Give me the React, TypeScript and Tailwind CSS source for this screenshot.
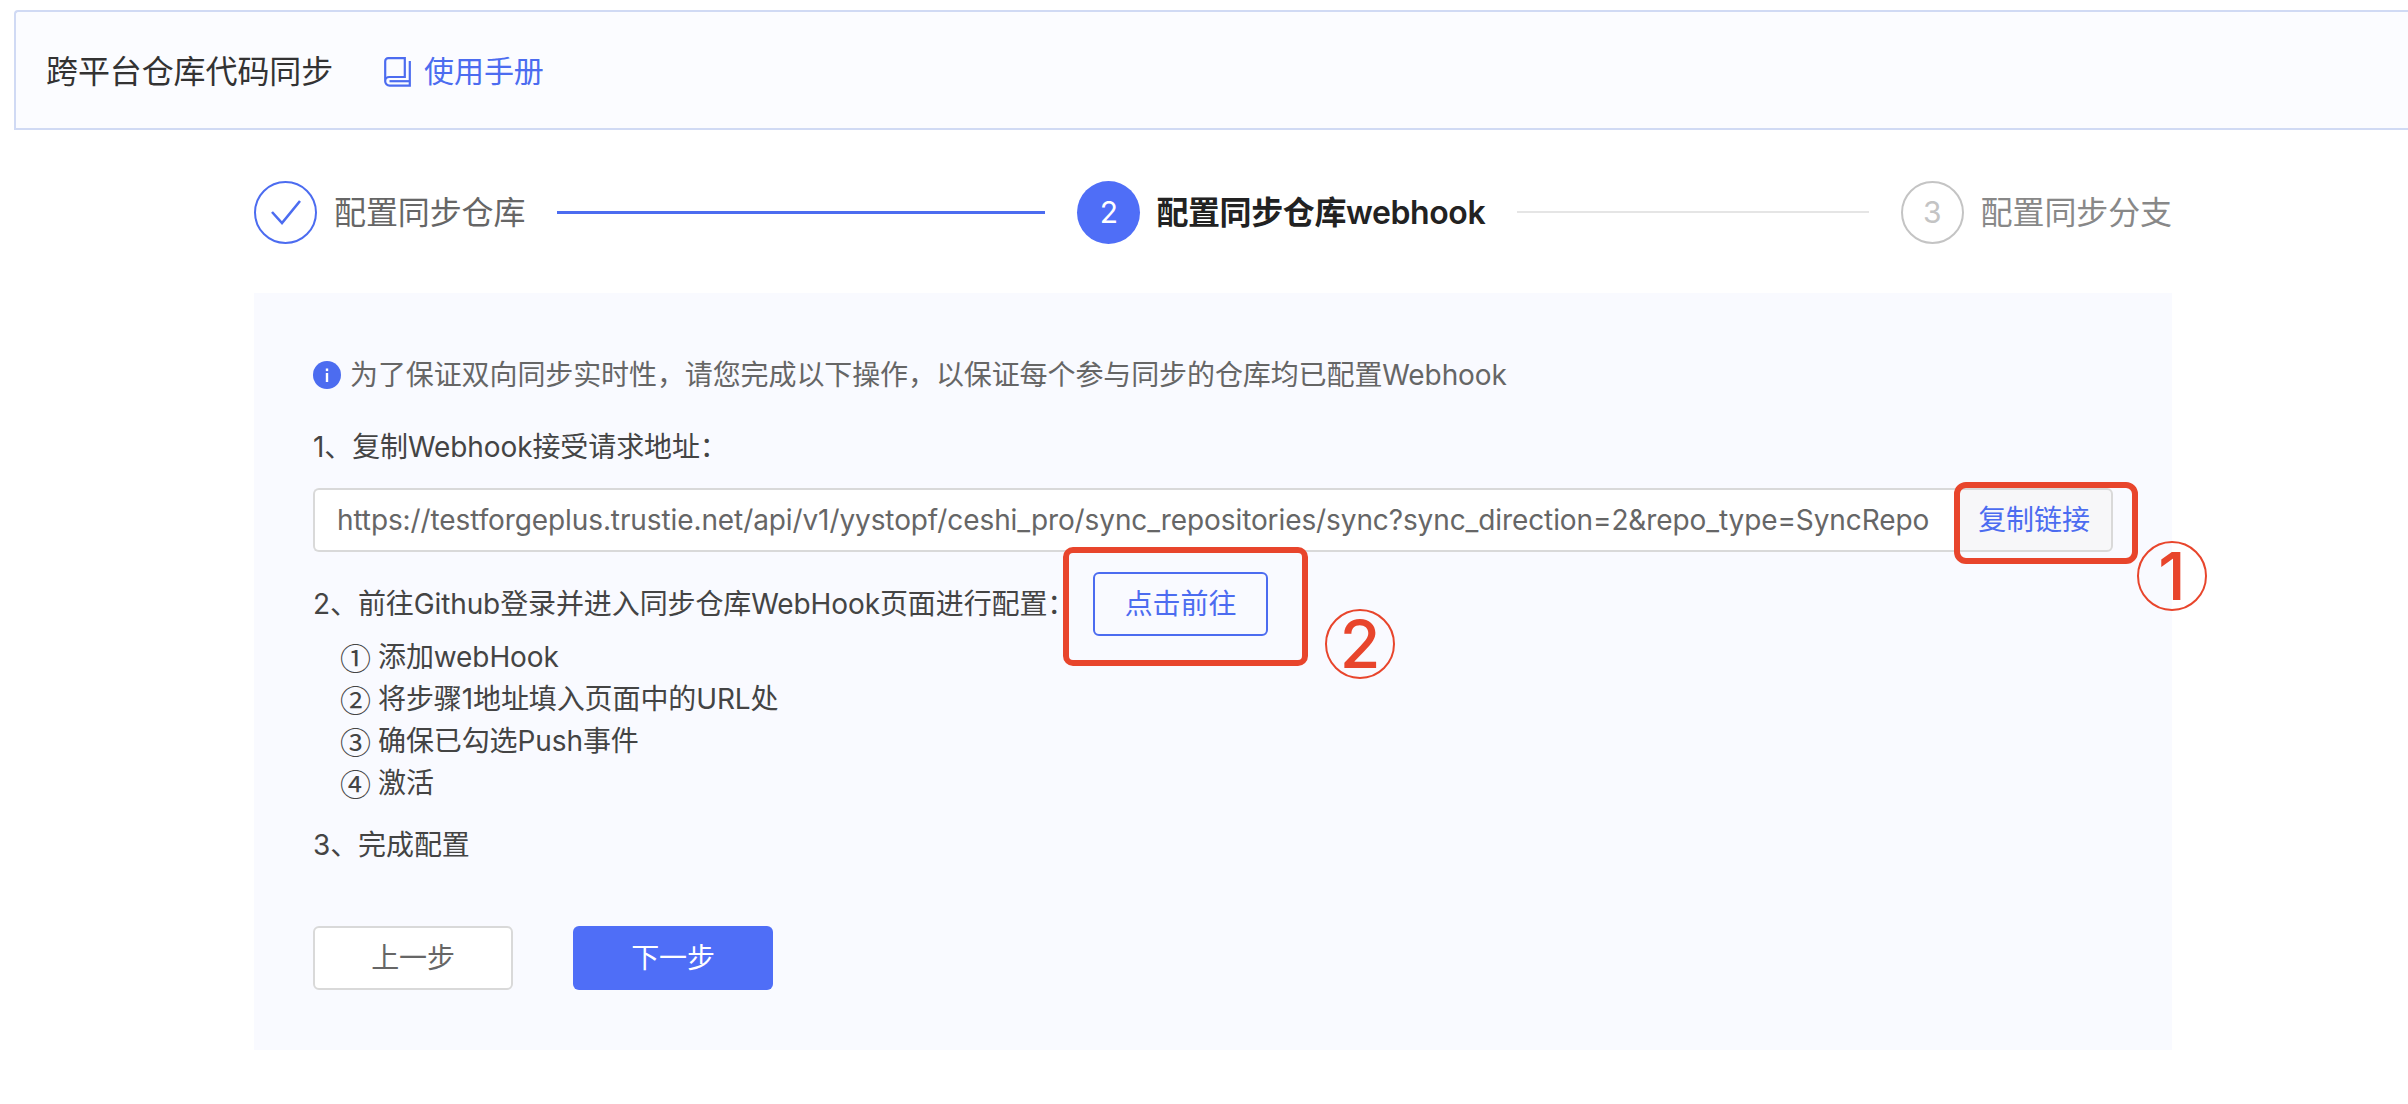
import React from 'react';

const FONT = 'font-["Inter","Noto_Sans_CJK_SC",sans-serif]';

const BookIcon = () => (
  <svg width="27" height="30" viewBox="0 0 27 30" fill="none" stroke="#4c6cf0" strokeWidth="2.2">
    <path d="M1.2 24V4.2a3 3 0 0 1 3-3h16.6V20H5.2a4 4 0 0 0-4 4 4.4 4.4 0 0 0 4.4 4.6h20.2V4" />
    <path d="M5.5 24.2h20" />
  </svg>
);

const InfoIcon = () => (
  <svg width="28" height="28" viewBox="0 0 28 28">
    <circle cx="14" cy="14" r="14" fill="#4c6cf0" />
    <rect x="12.8" y="12" width="2.4" height="9" fill="#fff" />
    <rect x="12.8" y="7.5" width="2.4" height="2.6" fill="#fff" />
  </svg>
);

const CheckIcon = () => (
  <svg width="30" height="25" viewBox="0 0 30 25" fill="none" stroke="#4c6cf0" strokeWidth="2.6">
    <path d="M1 12L11 23L29 1" />
  </svg>
);

const Annotation = ({ className, children }: { className: string; children: React.ReactNode }) => (
  <div className={`absolute flex h-[70px] w-[70px] items-center justify-center rounded-full border-[2.5px] border-[#e8452c] text-[66px] font-medium leading-none text-[#e8452c] ${className}`}>
    {children}
  </div>
);

const guideSteps = [
  { mark: '①', text: '添加webHook' },
  { mark: '②', text: '将步骤1地址填入页面中的URL处' },
  { mark: '③', text: '确保已勾选Push事件' },
  { mark: '④', text: '激活' },
];

export default function App() {
  return (
    <div className={`min-h-[1104px] bg-white text-[28px] tracking-[-0.1px] ${FONT}`}>
      <div className="ml-[14px] mt-[10px] flex h-[120px] items-center rounded-tl-[4px] border-y-[2px] border-l-[2px] border-[#d0daf4] bg-[#fbfcff] pl-[30px] pt-[3px]">
        <span className="text-[32px] text-[#333333]">跨平台仓库代码同步</span>
        <span className="ml-[51px]"><BookIcon /></span>
        <span className="ml-[13px] text-[30px] text-[#4c6cf0]">使用手册</span>
      </div>

      <div className="ml-[254px] mt-[50px] w-[1918px]">
        <div className="flex h-[64px] items-center">
          <div className="flex h-[63px] w-[63px] shrink-0 items-center justify-center rounded-full border-[2px] border-[#4c6cf0]">
            <CheckIcon />
          </div>
          <span className="ml-[17px] pt-[2px] text-[32px] text-[#666666]">配置同步仓库</span>
          <div className="mx-[32px] h-[3px] w-[488px] bg-[#4c6cf0]" />
          <div className="flex h-[63px] w-[63px] shrink-0 items-center justify-center rounded-full bg-[#4f6ef7] text-[30px] text-white">2</div>
          <span className="ml-[16px] pt-[2px] text-[32px] font-semibold tracking-[-0.4px] text-[#222222]">配置同步仓库webhook</span>
          <div className="mx-[32px] h-[2px] flex-1 bg-[#e5e5e5]" />
          <div className="flex h-[63px] w-[63px] shrink-0 items-center justify-center rounded-full border-[2px] border-[#c4c4c4] text-[30px] text-[#c4c4c4]">3</div>
          <span className="ml-[17px] pt-[2px] text-[32px] text-[#888888]">配置同步分支</span>
        </div>

        <div className="relative mt-[49px] h-[757px] bg-[#f9faff] pl-[59px] pr-[59px] pt-[61px]">
          <div className="flex h-[42px] items-center text-[#666666]">
            <InfoIcon />
            <span className="ml-[9px]">为了保证双向同步实时性，请您完成以下操作，以保证每个参与同步的仓库均已配置Webhook</span>
          </div>

          <div className="mt-[30px] h-[42px] leading-[42px] text-[#444444]">1、复制Webhook接受请求地址：</div>

          <div className="mt-[20px] flex h-[64px]">
            <div className="flex flex-1 items-center rounded-l-[6px] border-y-[2px] border-l-[2px] border-[#d9d9d9] bg-white pl-[22px] text-[#666666]">
              https://testforgeplus.trustie.net/api/v1/yystopf/ceshi_pro/sync_repositories/sync?sync_direction=2&amp;repo_type=SyncRepo
            </div>
            <div className="flex w-[158px] items-center justify-center rounded-r-[6px] border-[2px] border-[#d9d9d9] bg-[#f7f7f9] text-[#4c6cf0]">复制链接</div>
          </div>

          <div className="mt-[20px] flex h-[64px] items-center text-[#444444]">
            <span className="w-[780px] shrink-0">2、前往Github登录并进入同步仓库WebHook页面进行配置：</span>
            <div className="flex h-[64px] w-[175px] items-center justify-center rounded-[6px] border-[2px] border-[#4c6cf0] text-[#4c6cf0]">点击前往</div>
          </div>

          <div className="pl-[27px] leading-[42px] text-[#444444]">
            {guideSteps.map((step) => (
              <div key={step.mark} className="flex h-[42px]">
                <span className='w-[38px] font-["Noto_Sans_CJK_SC",sans-serif] text-[31px]'>{step.mark}</span>
                <span>{step.text}</span>
              </div>
            ))}
          </div>

          <div className="mt-[20px] h-[42px] leading-[42px] text-[#444444]">3、完成配置</div>

          <div className="mt-[60px] flex gap-[60px]">
            <div className="flex h-[64px] w-[200px] items-center justify-center rounded-[6px] border-[2px] border-[#d9d9d9] bg-white text-[#666666]">上一步</div>
            <div className="flex h-[64px] w-[200px] items-center justify-center rounded-[6px] bg-[#4f6ef7] text-white">下一步</div>
          </div>

          <div className="absolute left-[1700px] top-[189px] h-[82px] w-[184px] rounded-[12px] border-[6px] border-[#e8452c]" />
          <Annotation className="left-[1883px] top-[248px]">1</Annotation>
          <div className="absolute left-[809px] top-[254px] h-[119px] w-[245px] rounded-[10px] border-[6px] border-[#e8452c]" />
          <Annotation className="left-[1071px] top-[316px]">2</Annotation>
        </div>
      </div>
    </div>
  );
}
